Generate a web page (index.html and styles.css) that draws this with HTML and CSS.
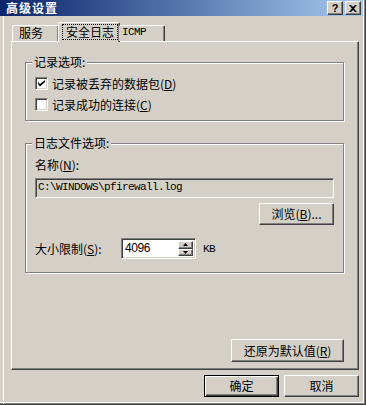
FILE: index.html
```html
<!DOCTYPE html>
<html lang="zh-CN">
<head>
    <meta charset="UTF-8">
    <title>高级设置</title>
    <link rel="stylesheet" href="styles.css">
</head>
<body>
    <div class="window">
        <div class="titlebar">
            <span class="title">高级设置</span>
            <div class="caption-btns">
                <span class="cap-btn help">?</span>
                <span class="cap-btn">
                    <svg width="8" height="7" viewBox="0 0 8 7"><path d="M0 0h2l2 2 2-2h2L5 3.5 8 7H6L4 5 2 7H0l3-3.5z" fill="#000"/></svg>
                </span>
            </div>
        </div>

        <div class="client">
            <div class="tabs">
                <div class="tab first">服务</div>
                <div class="tab active"><span class="focus">安全日志</span></div>
                <div class="tab last">ICMP</div>
            </div>

            <div class="pane">
                <div class="group g1">
                    <span class="legend">记录选项:</span>
                    <label class="check row1">
                        <span class="box"><svg width="7" height="7" viewBox="0 0 7 7"><path d="M0 2l2 2 5-4v2l-5 4.5L0 4z" fill="#000"/></svg></span>
                        <span>记录被丢弃的数据包(<u>D</u>)</span>
                    </label>
                    <label class="check row2">
                        <span class="box"></span>
                        <span>记录成功的连接(<u>C</u>)</span>
                    </label>
                </div>

                <div class="group g2">
                    <span class="legend">日志文件选项:</span>
                    <div class="field-label">名称(<u>N</u>):</div>
                    <div class="textfield">C:\WINDOWS\pfirewall.log</div>
                    <div class="browse-row">
                        <button class="btn browse">浏览(<u>B</u>)...</button>
                    </div>
                    <div class="size-row">
                        <span class="size-label">大小限制(<u>S</u>):</span>
                        <div class="spinbox">
                            <span class="spin-value">4096</span>
                            <div class="spin-btns">
                                <span class="spin-btn"><svg width="5" height="3" viewBox="0 0 5 3"><path d="M2.5 0L5 3H0z" fill="#000"/></svg></span>
                                <span class="spin-btn"><svg width="5" height="3" viewBox="0 0 5 3"><path d="M0 0h5L2.5 3z" fill="#000"/></svg></span>
                            </div>
                        </div>
                        <span class="unit">KB</span>
                    </div>
                </div>

                <div class="restore-row">
                    <button class="btn restore">还原为默认值(<u>R</u>)</button>
                </div>
            </div>

            <div class="dialog-btns">
                <button class="btn default">确定</button>
                <button class="btn">取消</button>
            </div>
        </div>
    </div>
</body>
</html>
```

FILE: styles.css
```css
body {
    margin: 0;
    width: 366px;
    height: 405px;
    overflow: hidden;
    font-family: "Noto Sans CJK SC", "Liberation Sans", sans-serif;
    font-size: 12px;
    line-height: 12px;
    color: #000;
    background: #d4d0c8;
}
.window {
    box-sizing: border-box;
    width: 366px;
    height: 405px;
    background: #d4d0c8;
    border-right: 1px solid #404040;
    border-bottom: 1px solid #404040;
    box-shadow: inset -1px -1px 0 #808080, inset -2px -2px 0 #fff;
}
.titlebar {
    height: 16px;
    margin-right: 2px;
    display: flex;
    align-items: center;
    justify-content: space-between;
    background: linear-gradient(to right, #0a246a, #a6caf0);
}
.title {
    color: #fff;
    font-weight: bold;
    font-size: 12px;
    letter-spacing: 1px;
    line-height: 16px;
    padding-left: 6px;
}
.caption-btns {
    display: flex;
    gap: 2px;
    padding-right: 2px;
}
.cap-btn {
    box-sizing: border-box;
    width: 16px;
    height: 14px;
    display: flex;
    align-items: center;
    justify-content: center;
    background: #d4d0c8;
    border: 1px solid;
    border-color: #fff #404040 #404040 #fff;
    box-shadow: inset -1px -1px 0 #808080;
}
.help {
    font-family: "Liberation Sans", sans-serif;
    font-weight: bold;
    font-size: 11px;
    line-height: 12px;
}

.client {
    margin-left: 3px;
    border-left: 1px solid #fff;
    padding: 6px 0 0 7px;
    height: 388px;
    box-sizing: border-box;
}

/* tabs */
.tabs {
    display: flex;
    align-items: flex-end;
    height: 19px;
    padding-left: 1px;
    position: relative;
    z-index: 1;
}
.tab {
    box-sizing: border-box;
    height: 16px;
    line-height: 13px;
    padding-left: 5px;
    border-top: 1px solid #fff;
    border-left: 1px solid #fff;
    border-right: 1px solid #404040;
    border-radius: 2px 2px 0 0;
    box-shadow: inset -1px 0 0 #808080;
    background: #d4d0c8;
}
.tab.first {
    width: 47px;
    padding-left: 6px;
}
.tab.active {
    width: 62px;
    height: 20px;
    margin-bottom: -1px;
    margin-left: -1px;
    padding: 1px 0 0 3px;
}
.tab.last {
    width: 46px;
    margin-left: -1px;
    padding-left: 3px;
    border-left: none;
    font-family: "Liberation Mono", monospace;
    font-size: 11px;
    letter-spacing: -0.6px;
}
.focus {
    display: inline-block;
    border: 1px dotted #000;
    padding: 0 3px;
    line-height: 14px;
}

/* page */
.pane {
    box-sizing: border-box;
    width: 348px;
    height: 329px;
    display: flex;
    flex-direction: column;
    padding: 0 14px 7px 13px;
    border-top: 1px solid #fff;
    border-left: 1px solid #fff;
    border-right: 1px solid #404040;
    border-bottom: 1px solid #404040;
    box-shadow: inset -1px -1px 0 #808080;
}
.group {
    box-sizing: border-box;
    border: 1px solid #808080;
    box-shadow: 1px 1px 0 #fff, inset 1px 1px 0 #fff;
    padding: 0 0 0 9px;
}
.legend {
    display: block;
    width: fit-content;
    margin: -7px 0 0 -3px;
    padding: 0 2px;
    line-height: 12px;
    background: #d4d0c8;
}
.g1 {
    margin-top: 20px;
    height: 59px;
}
.g2 {
    margin-top: 22px;
    height: 130px;
}
.check {
    display: flex;
    align-items: center;
    gap: 4px;
    height: 13px;
}
.row1 {
    margin-top: 9px;
}
.row2 {
    margin-top: 8px;
}
.box {
    box-sizing: border-box;
    width: 13px;
    height: 13px;
    display: flex;
    align-items: center;
    justify-content: center;
    background: #fff;
    border: 1px solid;
    border-color: #808080 #fff #fff #808080;
    box-shadow: inset 1px 1px 0 #404040, inset -1px -1px 0 #d4d0c8;
}
u {
    text-decoration: underline;
    text-underline-offset: 1px;
}

.field-label {
    margin-top: 10px;
}
.textfield {
    box-sizing: border-box;
    width: 299px;
    height: 20px;
    margin-top: 7px;
    padding-left: 2px;
    line-height: 16px;
    font-family: "Liberation Mono", monospace;
    font-size: 11px;
    letter-spacing: -0.6px;
    background: #d4d0c8;
    border: 1px solid;
    border-color: #808080 #fff #fff #808080;
    box-shadow: inset 1px 1px 0 #404040, inset -1px -1px 0 #d4d0c8;
}
.browse-row {
    width: 299px;
    display: flex;
    justify-content: flex-end;
    margin-top: 5px;
}

/* buttons */
.btn {
    box-sizing: border-box;
    height: 22px;
    padding: 0;
    font: inherit;
    line-height: 18px;
    color: #000;
    background: #d4d0c8;
    border: 1px solid;
    border-color: #fff #404040 #404040 #fff;
    box-shadow: inset -1px -1px 0 #808080;
}
.browse {
    width: 75px;
}
.size-row {
    display: flex;
    align-items: center;
    margin-top: 13px;
}
.size-label {
    width: 86px;
}
.spinbox {
    box-sizing: border-box;
    width: 75px;
    height: 21px;
    display: flex;
    justify-content: space-between;
    background: #fff;
    border: 1px solid;
    border-color: #808080 #fff #fff #808080;
    box-shadow: inset 1px 1px 0 #404040, inset -1px -1px 0 #d4d0c8;
    padding: 2px;
}
.spin-value {
    font-family: "Liberation Sans", sans-serif;
    font-size: 12px;
    letter-spacing: -0.4px;
    line-height: 15px;
    padding-left: 1px;
}
.spin-btns {
    display: flex;
    flex-direction: column;
    width: 15px;
}
.spin-btn {
    box-sizing: border-box;
    flex: 1;
    display: flex;
    align-items: center;
    justify-content: center;
    background: #d4d0c8;
    border: 1px solid;
    border-color: #fff #404040 #404040 #fff;
    box-shadow: inset -1px -1px 0 #808080;
}
.unit {
    margin-left: 7px;
    font-family: "Liberation Mono", monospace;
    font-size: 11px;
    letter-spacing: -0.6px;
}

.restore-row {
    margin-top: auto;
    display: flex;
    justify-content: flex-end;
}
.restore {
    width: 113px;
    height: 23px;
}

.dialog-btns {
    width: 348px;
    display: flex;
    justify-content: flex-end;
    gap: 5px;
    margin-top: 5px;
}
.dialog-btns .btn {
    width: 75px;
}
.btn.default {
    border: 1px solid #000;
    box-shadow: inset 1px 1px 0 #fff, inset -1px -1px 0 #404040, inset -2px -2px 0 #808080;
}
```
